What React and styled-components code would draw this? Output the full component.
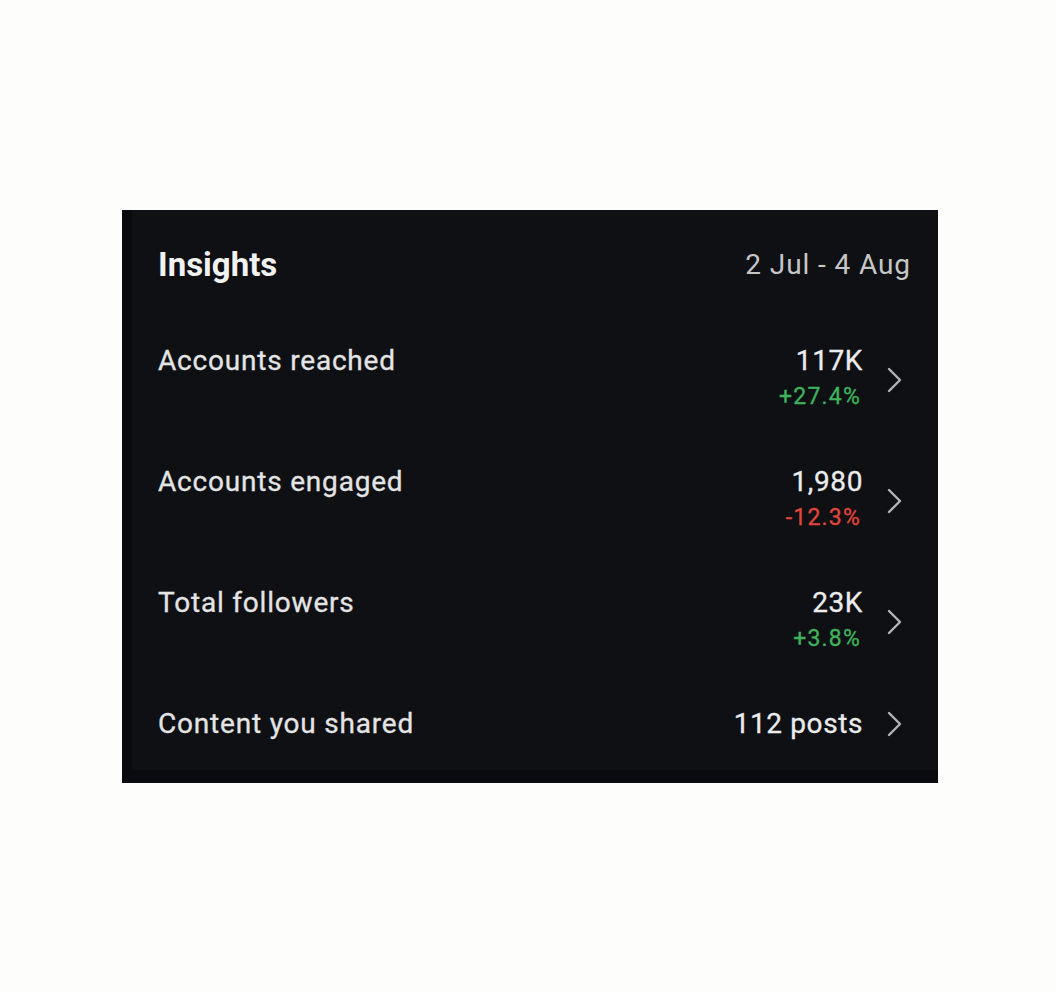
import React from "react";
import styled, { createGlobalStyle } from "styled-components";

const GlobalStyle = createGlobalStyle`
   body {
      margin: 0;
      background: #fdfdfb;
      font-family: Roboto, "Noto Sans", sans-serif;
   }
`;

const metrics = [
   { label: "Accounts reached", value: "117K", change: "+27.4%", up: true },
   { label: "Accounts engaged", value: "1,980", change: "-12.3%", up: false },
   { label: "Total followers", value: "23K", change: "+3.8%", up: true },
   { label: "Content you shared", value: "112 posts" }
];

const Chevron = () => (
   <svg width="18" height="28" viewBox="0 0 18 28" fill="none">
      <path
         d="M4 3 L15 14 L4 25"
         stroke="#b4b4b4"
         strokeWidth="2.4"
         strokeLinecap="round"
         strokeLinejoin="round"
      />
   </svg>
);

const App = () => (
   <Page>
      <GlobalStyle />
      <Card>
         <Header>
            <Title>Insights</Title>
            <Range>2 Jul - 4 Aug</Range>
         </Header>
         <List>
            {metrics.map(m => (
               <Row key={m.label}>
                  <Label>{m.label}</Label>
                  <Right single={!m.change}>
                     <Values>
                        <Value>{m.value}</Value>
                        {m.change && <Change up={m.up}>{m.change}</Change>}
                     </Values>
                     <Chevron />
                  </Right>
               </Row>
            ))}
         </List>
      </Card>
   </Page>
);

const Page = styled.div`
   padding: 210px 0 0 122px;
`;

const Card = styled.div`
   width: 816px;
   box-sizing: border-box;
   background: #0e1014;
   border-left: 10px solid #090a0c;
   border-bottom: 13px solid #0a0b0e;
   padding: 37px 35px 30px 26px;
`;

const Header = styled.div`
   display: flex;
   justify-content: space-between;
   align-items: center;
`;

const Title = styled.div`
   font-size: 33px;
   font-weight: 700;
   line-height: 36px;
   color: #f2f2f2;
`;

const Range = styled.div`
   font-size: 28px;
   letter-spacing: 0.9px;
   line-height: 36px;
   color: #c6c6c6;
   margin-right: -8px;
`;

const List = styled.div`
   display: flex;
   flex-direction: column;
   gap: 51px;
   margin-top: 62px;
`;

const Row = styled.div`
   display: flex;
   justify-content: space-between;
   align-items: flex-start;
`;

const Label = styled.div`
   font-size: 28px;
   letter-spacing: 0.8px;
   line-height: 32px;
   color: #e4e4e4;
   -webkit-text-stroke: 0.3px #e4e4e4;
`;

const Right = styled.div`
   display: flex;
   align-items: center;
   gap: 22px;
   align-self: ${({ single }) => (single ? "center" : "stretch")};
`;

const Values = styled.div`
   display: flex;
   flex-direction: column;
   align-items: flex-end;
`;

const Value = styled.div`
   font-size: 28px;
   letter-spacing: 0.6px;
   line-height: 32px;
   color: #ececec;
   -webkit-text-stroke: 0.3px #ececec;
`;

const Change = styled.div`
   font-size: 23px;
   letter-spacing: 1.2px;
   line-height: 36px;
   margin-top: 2px;
   margin-right: 2px;
   color: ${({ up }) => (up ? "#3fb35c" : "#e0463c")};
   -webkit-text-stroke: 0.3px ${({ up }) => (up ? "#3fb35c" : "#e0463c")};
`;

export default App;
